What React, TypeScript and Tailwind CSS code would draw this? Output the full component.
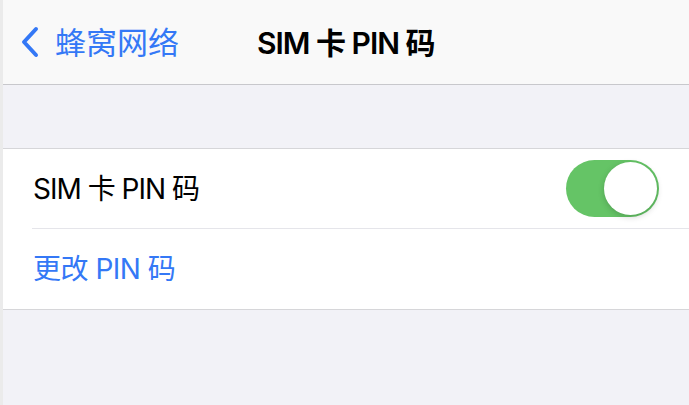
import React from "react";

export default function App() {
  const font = { fontFamily: 'Inter, "Noto Sans CJK SC", sans-serif' };
  return (
    <div className="flex h-[405px] w-[689px] overflow-hidden bg-[#f2f2f7]" style={font}>
      <div className="w-[3px] shrink-0 bg-[#ebebeb]" />
      <div className="flex flex-1 flex-col">
        <div className="relative flex h-[85px] items-center border-b border-[#c8c8cc] bg-[#f9f9f9]">
          <div className="flex items-center pl-[17px] text-[#3478f6]">
            <svg width="20" height="32" viewBox="0 0 20 32" fill="none">
              <path d="M16 3 L4 16 L16 29" stroke="#3478f6" strokeWidth="4" strokeLinecap="round" strokeLinejoin="round" />
            </svg>
            <span className="ml-[15px] text-[31px] leading-none">蜂窝网络</span>
          </div>
          <div className="absolute left-[254px] top-[28px] text-[30px] font-semibold leading-none tracking-[-1px] text-black">SIM 卡 PIN 码</div>
        </div>
        <div className="h-[63px]" />
        <div className="flex flex-col border-y border-[#d6d6d9] bg-white">
          <div className="flex h-[79px] items-center justify-between pl-[30px] pr-[30px]">
            <span className="text-[28px] leading-none tracking-[-1px] text-black">SIM 卡 PIN 码</span>
            <div className="flex h-[57px] w-[93px] items-center justify-end rounded-full bg-[#65c466] p-[2px]">
              <div className="h-[53px] w-[53px] rounded-full bg-white shadow-[0_2px_6px_rgba(0,0,0,0.18)]" />
            </div>
          </div>
          <div className="ml-[29px] h-px bg-[#e5e5ea]" />
          <div className="flex h-[80px] items-center pl-[30px]">
            <span className="text-[28px] leading-none tracking-[-0.5px] text-[#3478f6]">更改 PIN 码</span>
          </div>
        </div>
      </div>
    </div>
  );
}
